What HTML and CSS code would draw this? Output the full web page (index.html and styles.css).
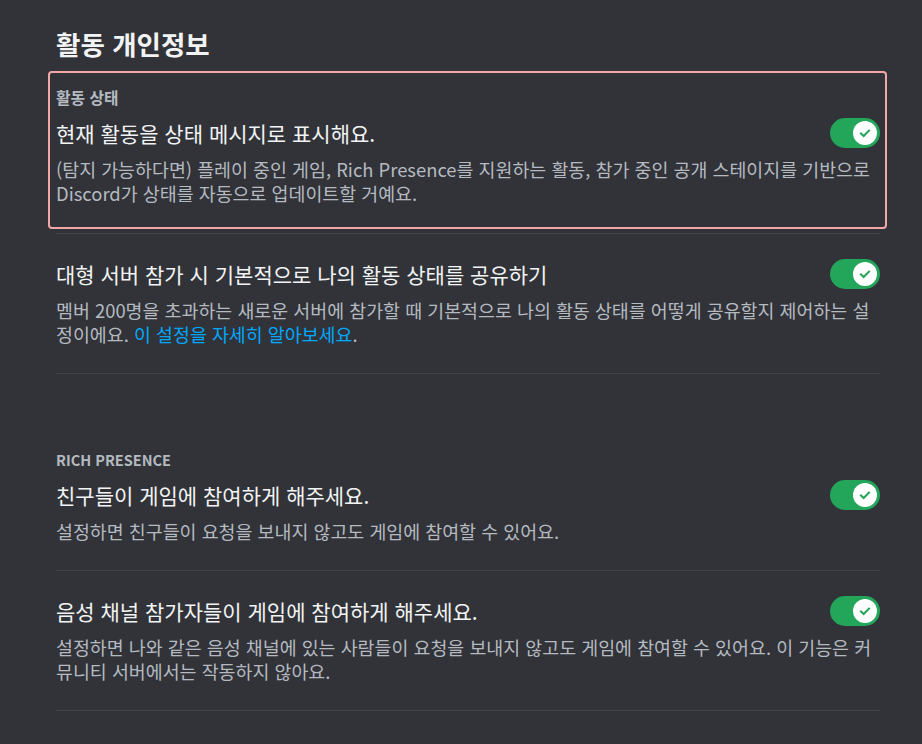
FILE: index.html
```html
<!DOCTYPE html>
<html lang="ko">
<head>
<meta charset="utf-8">
<link rel="stylesheet" href="styles.css">
</head>
<body>
<main class="page">
  <h2 class="page-title">활동 개인정보</h2>

  <div class="highlight">
    <div class="header">활동 상태</div>
    <div class="row">
      <div class="title">현재 활동을 상태 메시지로 표시해요.</div>
      <div class="switch"><span class="knob"><svg viewBox="0 0 20 20" width="16" height="16"><path d="M5 10.5l3.3 3.3L15 7" fill="none" stroke="#23a55a" stroke-width="2.6" stroke-linecap="square"/></svg></span></div>
    </div>
    <div class="desc">(탐지 가능하다면) 플레이 중인 게임, Rich Presence를 지원하는 활동, 참가 중인 공개 스테이지를 기반으로 Discord가 상태를 자동으로 업데이트할 거예요.</div>
  </div>
  <div class="divider divider-first"></div>

  <div class="item">
    <div class="row">
      <div class="title">대형 서버 참가 시 기본적으로 나의 활동 상태를 공유하기</div>
      <div class="switch"><span class="knob"><svg viewBox="0 0 20 20" width="16" height="16"><path d="M5 10.5l3.3 3.3L15 7" fill="none" stroke="#23a55a" stroke-width="2.6" stroke-linecap="square"/></svg></span></div>
    </div>
    <div class="desc">멤버 200명을 초과하는 새로운 서버에 참가할 때 기본적으로 나의 활동 상태를 어떻게 공유할지 제어하는 설정이에요. <a class="link" href="#">이 설정을 자세히 알아보세요</a>.</div>
    <div class="divider"></div>
  </div>

  <div class="header section-header">Rich Presence</div>

  <div class="item item-first">
    <div class="row">
      <div class="title">친구들이 게임에 참여하게 해주세요.</div>
      <div class="switch"><span class="knob"><svg viewBox="0 0 20 20" width="16" height="16"><path d="M5 10.5l3.3 3.3L15 7" fill="none" stroke="#23a55a" stroke-width="2.6" stroke-linecap="square"/></svg></span></div>
    </div>
    <div class="desc">설정하면 친구들이 요청을 보내지 않고도 게임에 참여할 수 있어요.</div>
    <div class="divider"></div>
  </div>

  <div class="item">
    <div class="row">
      <div class="title">음성 채널 참가자들이 게임에 참여하게 해주세요.</div>
      <div class="switch"><span class="knob"><svg viewBox="0 0 20 20" width="16" height="16"><path d="M5 10.5l3.3 3.3L15 7" fill="none" stroke="#23a55a" stroke-width="2.6" stroke-linecap="square"/></svg></span></div>
    </div>
    <div class="desc">설정하면 나와 같은 음성 채널에 있는 사람들이 요청을 보내지 않고도 게임에 참여할 수 있어요. 이 기능은 커뮤니티 서버에서는 작동하지 않아요.</div>
    <div class="divider"></div>
  </div>
</main>
</body>
</html>
```

FILE: styles.css
```css
html, body {
  margin: 0;
  padding: 0;
  background: #313338;
}

body {
  font-family: "Noto Sans CJK KR", "Noto Sans", sans-serif;
  color: #f2f3f5;
}

.page {
  width: 824px;
  padding: 29px 0 0 56px;
}

.page-title {
  margin: 0 0 12px 0;
  font-size: 26.5px;
  line-height: 30px;
  font-weight: 700;
  color: #f2f3f5;
}

.highlight {
  margin: 0 -7px 0 -8px;
  padding: 15px 5px 22px 6px;
  border: 2px solid #f2a7a7;
  border-radius: 4px;
}

.header {
  font-size: 15.8px;
  line-height: 20px;
  font-weight: 700;
  color: #b5bac1;
  margin-bottom: 10px;
}

.section-header {
  text-transform: uppercase;
  margin-top: 76px;
  font-size: 14.5px;
}

.row {
  display: flex;
  align-items: center;
  justify-content: space-between;
  height: 30px;
}

.title {
  font-size: 21px;
  line-height: 25px;
  font-weight: 400;
  color: #f2f3f5;
}

.switch {
  flex: none;
  width: 50px;
  height: 30px;
  border-radius: 15px;
  background: #23a55a;
  display: flex;
  align-items: center;
  justify-content: flex-end;
  padding-right: 3px;
  box-sizing: border-box;
}

.knob {
  width: 24px;
  height: 24px;
  border-radius: 50%;
  background: #ffffff;
  display: flex;
  align-items: center;
  justify-content: center;
}

.desc {
  margin-top: 9px;
  font-size: 18.4px;
  line-height: 24px;
  color: #b5bac1;
}

.link {
  color: #00a8fc;
  text-decoration: none;
}

.divider {
  height: 1px;
  background: #3f4147;
  margin-top: 27px;
}

.divider-first {
  margin-top: 4px;
}

.item {
  margin-top: 25px;
}

.item-first {
  margin-top: 0;
}
```
